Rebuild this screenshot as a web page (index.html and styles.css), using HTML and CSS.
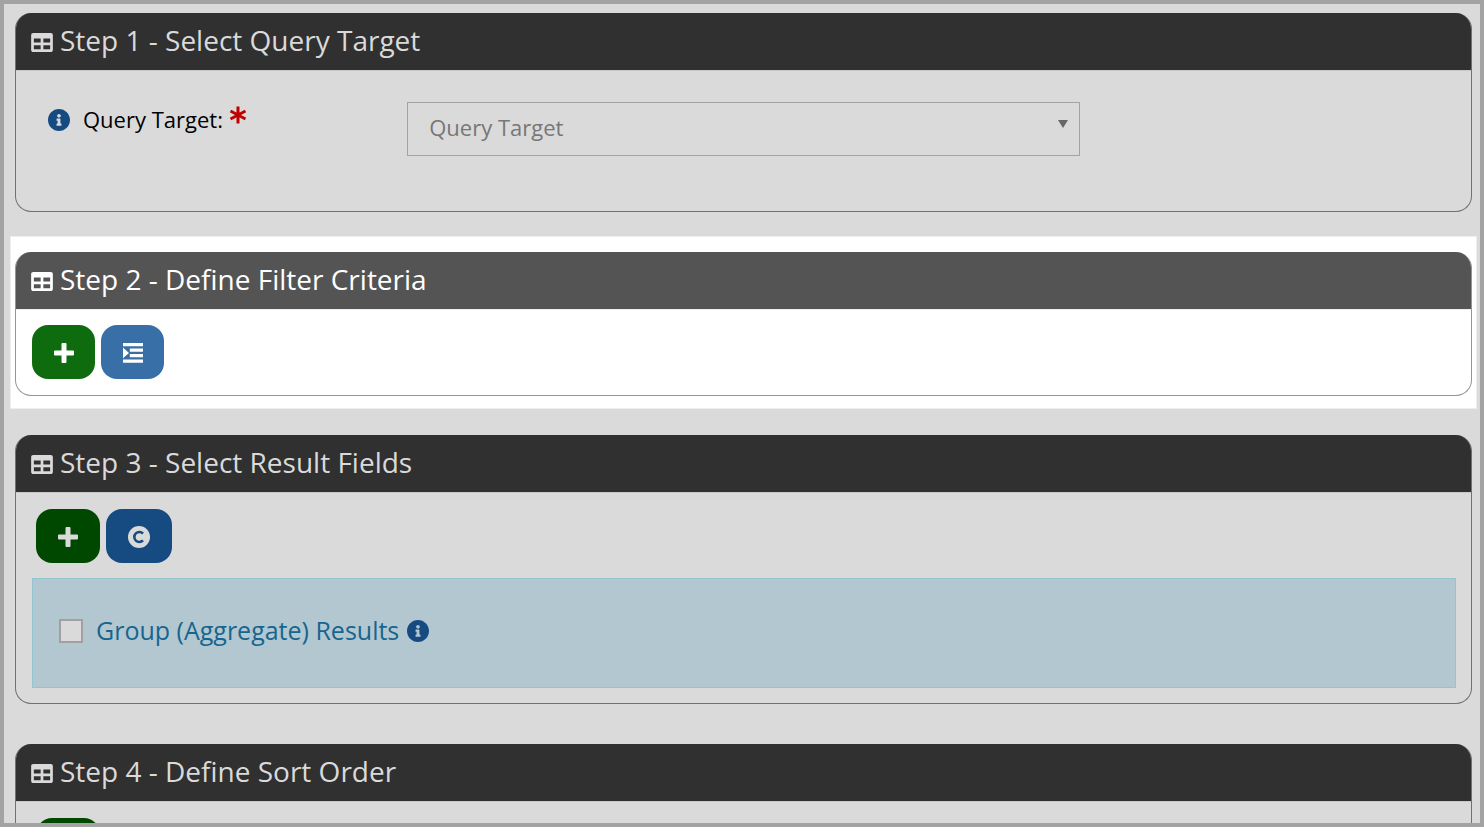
FILE: index.html
```html
<!DOCTYPE html>
<html lang="en">
<head>
	<meta charset="utf-8">
	<title>Query Builder</title>
	<link rel="stylesheet" href="styles.css">
</head>
<body>
	<svg class="sprite" aria-hidden="true">
		<symbol id="table" viewBox="0 32 512 448">
			<path d="M464 32H48C21.5 32 0 53.500 0 80v352c0 26.500 21.500 48 48 48h416c26.500 0 48-21.500 48-48V80c0-26.500-21.500-48-48-48zM224 416H64v-96h160v96zm0-160H64v-96h160v96zm224 160H288v-96h160v96zm0-160H288v-96h160v96z"/>
		</symbol>
		<symbol id="info" viewBox="8 8 496 496">
			<path d="M256 8C119.043 8 8 119.083 8 256c0 136.997 111.043 248 248 248s248-111.003 248-248C504 119.083 392.957 8 256 8zm0 110c23.196 0 42 18.804 42 42s-18.804 42-42 42-42-18.804-42-42 18.804-42 42-42zm56 254c0 6.627-5.373 12-12 12h-88c-6.627 0-12-5.373-12-12v-24c0-6.627 5.373-12 12-12h12v-64h-12c-6.627 0-12-5.373-12-12v-24c0-6.627 5.373-12 12-12h64c6.627 0 12 5.373 12 12v100h12c6.627 0 12 5.373 12 12v24z"/>
		</symbol>
		<symbol id="plus" viewBox="0 0 20 20">
			<path d="M8.500 0h3a1 1 0 0 1 1 1v6.500H19a1 1 0 0 1 1 1v3a1 1 0 0 1-1 1h-6.500V19a1 1 0 0 1-1 1h-3a1 1 0 0 1-1-1v-6.500H1a1 1 0 0 1-1-1v-3a1 1 0 0 1 1-1h6.500V1a1 1 0 0 1 1-1z"/>
		</symbol>
		<symbol id="indent" viewBox="0 0 20 20">
			<path d="M0 0h20v3.200H0zM6.800 5.500H20v3.200H6.800zM6.800 11H20v3.200H6.800zM0 16.500h20v3.200H0zM0 4.500l6 5.400-6 5.400z"/>
		</symbol>
		<symbol id="copyright" viewBox="0 0 22 22">
			<circle cx="11" cy="11" r="11"/>
			<path class="cut" d="M15 7.600A5 5 0 1 0 15 14.400"/>
		</symbol>
	</svg>

	<main class="page">
		<section class="panel">
			<h2 class="panel-title"><svg class="icon-table"><use href="#table"/></svg>Step 1 - Select Query Target</h2>
			<div class="panel-body target-row">
				<div class="target-label">
					<svg class="icon-info"><use href="#info"/></svg>
					<label for="target">Query Target:</label>
					<svg class="required" viewBox="0 0 18 18"><path d="M9 .5v17M1.500 5l15 8M1.500 13l15-8"/></svg>
				</div>
				<div class="select-wrap">
					<select id="target" required>
						<option value="" selected>Query Target</option>
					</select>
					<svg class="caret" viewBox="0 0 10 8"><path d="M0 0h10L5 8z"/></svg>
				</div>
			</div>
		</section>

		<div class="spotlight">
			<section class="panel">
				<h2 class="panel-title"><svg class="icon-table"><use href="#table"/></svg>Step 2 - Define Filter Criteria</h2>
				<div class="panel-body">
					<div class="buttons">
						<button type="button" class="btn add" aria-label="Add filter"><svg class="icon"><use href="#plus"/></svg></button>
						<button type="button" class="btn blue" aria-label="Add group"><svg class="icon"><use href="#indent"/></svg></button>
					</div>
				</div>
			</section>
		</div>

		<section class="panel">
			<h2 class="panel-title"><svg class="icon-table"><use href="#table"/></svg>Step 3 - Select Result Fields</h2>
			<div class="panel-body">
				<div class="buttons inset">
					<button type="button" class="btn add" aria-label="Add field"><svg class="icon"><use href="#plus"/></svg></button>
					<button type="button" class="btn blue" aria-label="Add constant"><svg class="icon-info"><use href="#copyright"/></svg></button>
				</div>
				<div class="group-box">
					<input type="checkbox" id="group">
					<label for="group">Group (Aggregate) Results</label>
					<svg class="icon-info"><use href="#info"/></svg>
				</div>
			</div>
		</section>

		<section class="panel">
			<h2 class="panel-title"><svg class="icon-table"><use href="#table"/></svg>Step 4 - Define Sort Order</h2>
			<div class="panel-body">
				<div class="buttons inset">
					<button type="button" class="btn add" aria-label="Add sort"><svg class="icon"><use href="#plus"/></svg></button>
				</div>
			</div>
		</section>
	</main>
</body>
</html>
```
FILE: styles.css
```css
* {
	box-sizing: border-box;
}
body {
	margin: 0;
	font-family: "Open Sans", sans-serif;
	font-size: 22px;
	color: #000;
}
svg {
	flex: none;
	fill: currentColor;
}
.sprite {
	display: none;
}
.page {
	height: 100vh;
	overflow: hidden;
	padding: 9px 8px 0 11px;
	border: 4px solid #a3a3a3;
	background-color: #dadada;
}

/* panels */
.panel {
	margin-bottom: 40px;
	border: 1px solid #717171;
	border-top: 0;
	border-radius: 16px;
	overflow: hidden;
}
.panel-title {
	display: flex;
	align-items: center;
	gap: 7px;
	height: 58px;
	margin: 0;
	padding: 0 15px 4px;
	border-bottom: 1px solid #c8c8c8;
	background-color: #303030;
	color: #dadada;
	font-size: 28px;
	font-weight: 400;
}
.icon-table {
	width: 22px;
	height: 19px;
	margin-top: 5px;
}
.panel-body {
	padding: 15px 15px 15px 16px;
}

/* highlighted step */
.spotlight {
	margin: -16px -5px 26px;
	padding: 15px 4px 12px;
	border: 1px solid #eee;
	background-color: #fff;
}
.spotlight .panel {
	margin: 0;
	border-color: #959595;
}
.spotlight .panel-title {
	border-color: #eee;
	background-color: #545454;
	color: #fff;
}
.spotlight .panel-body {
	padding-bottom: 16px;
}

/* step 1 */
.target-row {
	display: grid;
	grid-template-columns: 1fr 2fr 1fr;
	padding: 31px 15px 55px;
}
.target-label {
	display: flex;
	align-items: center;
	height: 36px;
	padding-left: 17px;
}
.target-label label {
	margin: 0 6px 0 13px;
	padding-bottom: 2px;
}
.icon-info {
	width: 22px;
	height: 22px;
	color: #154b80;
}
.required {
	align-self: flex-start;
	width: 18px;
	height: 18px;
	margin-top: 4px;
	fill: none;
	stroke: #c00000;
	stroke-width: 3;
}
.select-wrap {
	position: relative;
	margin: 0 20px;
}
select {
	display: block;
	width: 100%;
	height: 54px;
	padding: 0 21px 4px;
	border: 1px solid #a3a3a3;
	border-radius: 0;
	background-color: transparent;
	color: #777;
	font: inherit;
	appearance: none;
}
.caret {
	position: absolute;
	top: 18px;
	right: 12px;
	width: 10px;
	height: 8px;
	color: #666;
	pointer-events: none;
}

/* buttons */
.buttons {
	display: flex;
	gap: 6px;
}
.inset {
	padding: 1px 0 0 4px;
}
.btn {
	display: flex;
	align-items: center;
	justify-content: center;
	width: 63px;
	height: 54px;
	padding: 1px 0 0;
	border: 0;
	border-radius: 16px;
	color: #fff;
}
.icon {
	width: 20px;
	height: 20px;
}
.add {
	background-color: #0e6b0e;
}
.blue {
	background-color: #386fa6;
}
.inset .btn {
	width: 64px;
	color: #dadada;
}
.inset .add {
	background-color: #004700;
}
.inset .blue {
	width: 66px;
	background-color: #154b80;
}
.btn .icon-info {
	color: #dadada;
}
.cut {
	fill: none;
	stroke: #154b80;
	stroke-width: 2.6;
}

/* step 3 */
.group-box {
	display: flex;
	align-items: center;
	height: 110px;
	margin-top: 15px;
	padding: 0 26px 4px;
	border: 1px solid #93c4d0;
	background-color: #b3c7d0;
	color: #17658f;
	font-size: 25px;
}
.group-box label {
	margin: 0 8px 0 13px;
	padding-bottom: 2px;
}
input[type="checkbox"] {
	width: 24px;
	height: 24px;
	margin: 0;
	border: 2px solid #a0a0a0;
	background-color: #dadada;
	appearance: none;
}
input[type="checkbox"]:checked {
	background-color: #154b80;
}
```
